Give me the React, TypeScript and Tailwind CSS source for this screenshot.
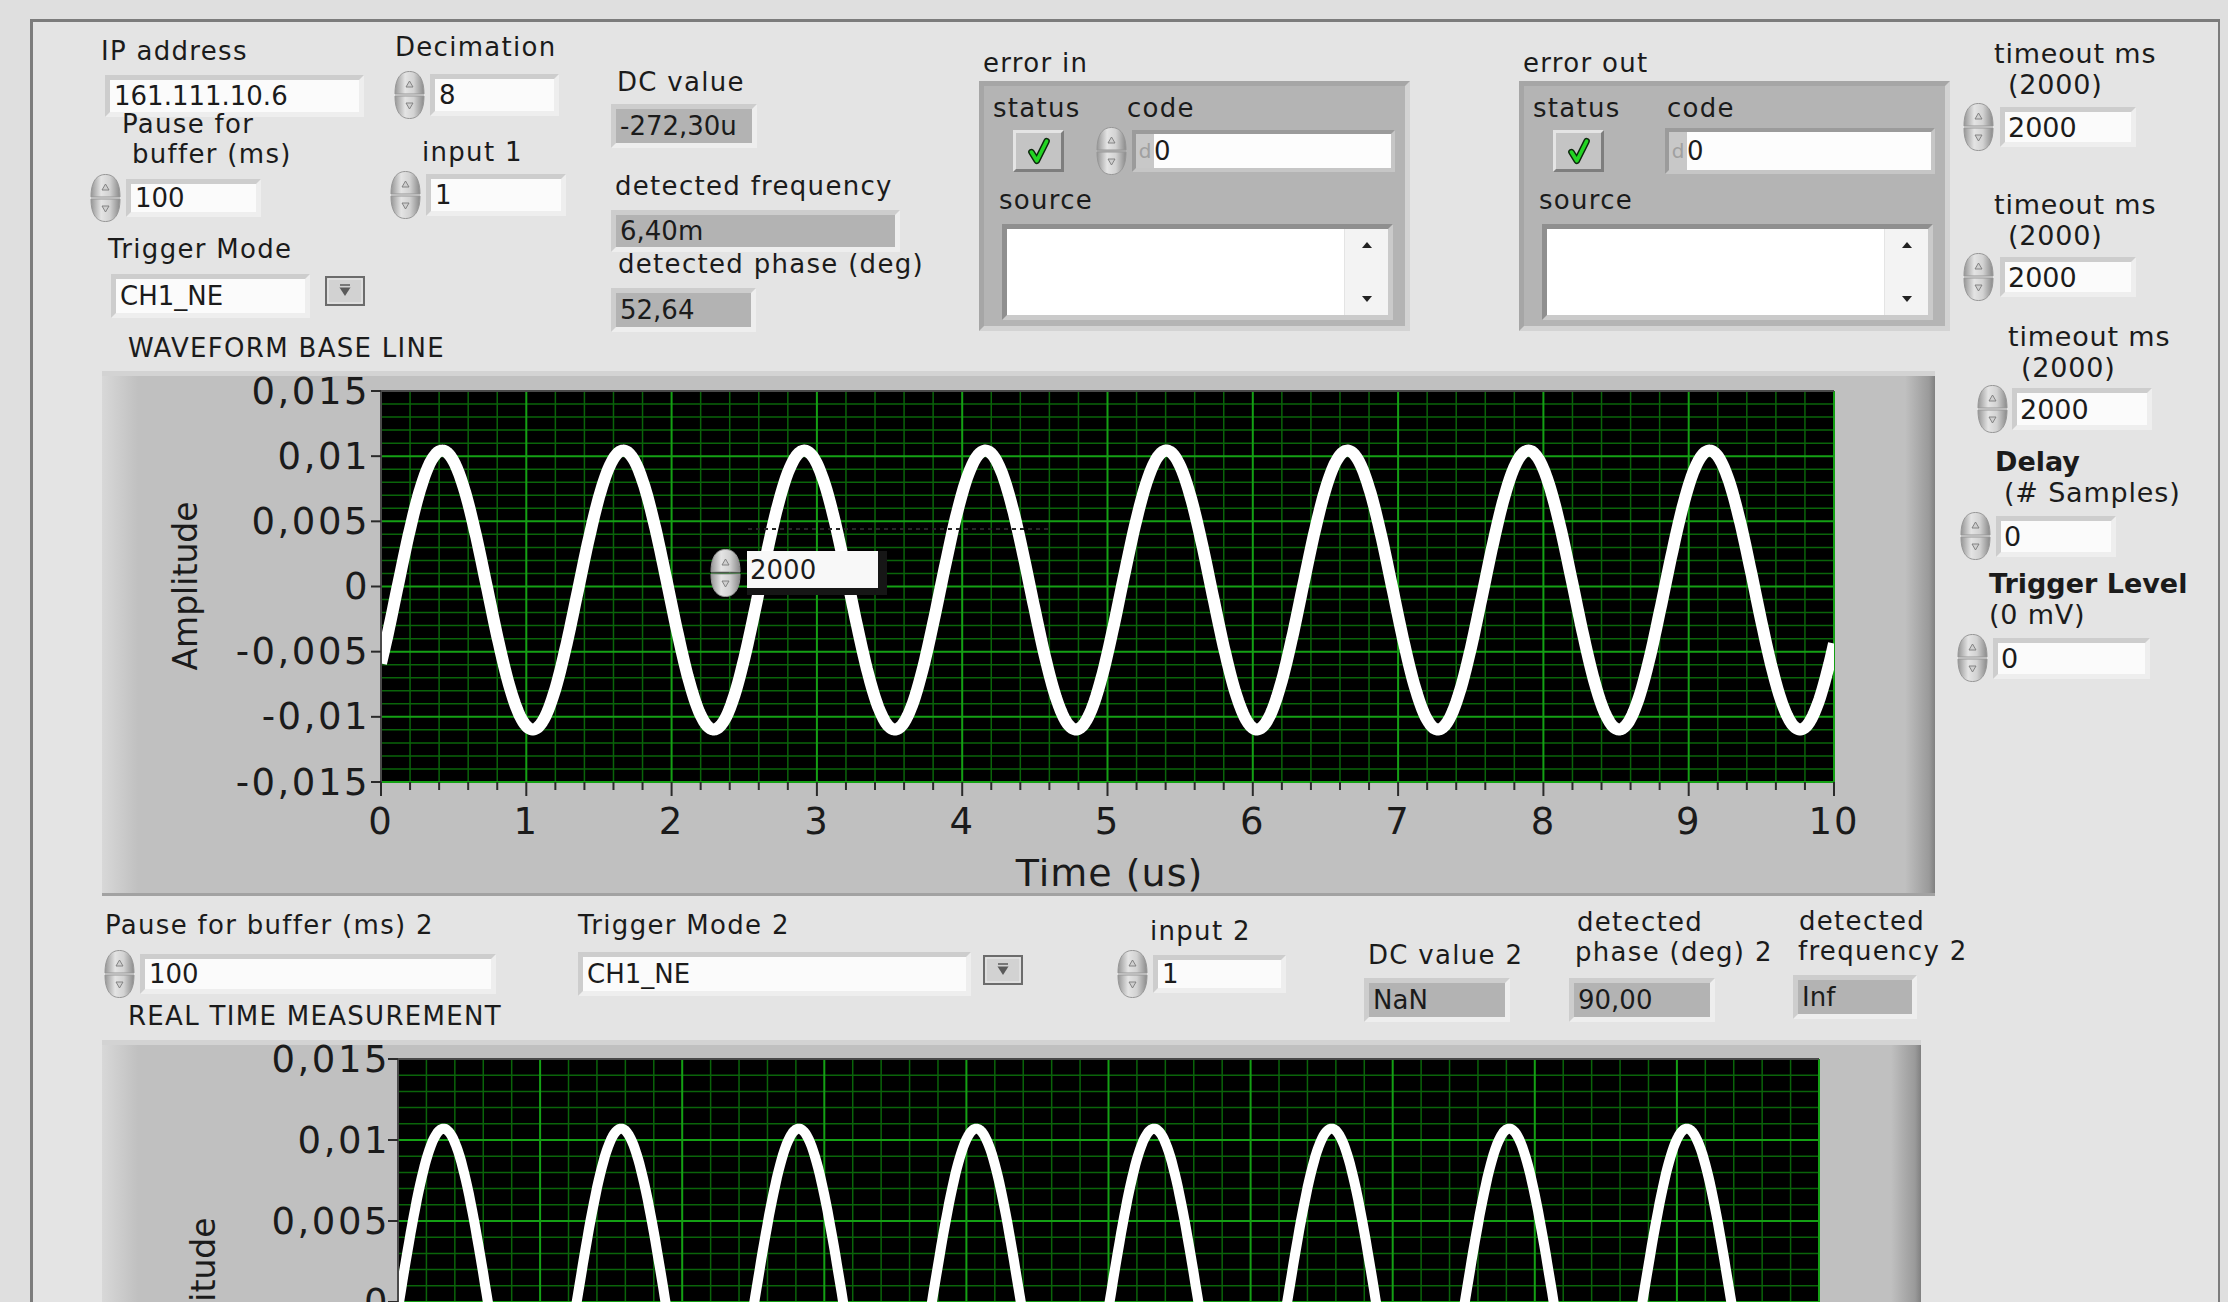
import React from "react";

type Cn = { className?: string };

function Label({ children, className = "" }: { children: React.ReactNode } & Cn) {
  return (
    <div className={`whitespace-nowrap text-[26px] leading-[30px] tracking-[0.05em] text-[#1b1b1b] ${className}`}>
      {children}
    </div>
  );
}

function RLabel({ children, className = "" }: { children: React.ReactNode } & Cn) {
  return (
    <div className={`whitespace-nowrap text-[27px] leading-[31px] tracking-[0.03em] text-[#1b1b1b] ${className}`}>
      {children}
    </div>
  );
}

// LabVIEW increment / decrement arrows
function Spinner({ className = "" }: Cn) {
  return (
    <svg viewBox="0 0 35 50" className={`h-[50px] w-[35px] shrink-0 ${className}`}>
      <defs>
        <linearGradient id="spinFill" x1="0" y1="0" x2="1" y2="0">
          <stop offset="0" stopColor="#969696" />
          <stop offset="0.35" stopColor="#e4e4e4" />
          <stop offset="0.65" stopColor="#d2d2d2" />
          <stop offset="1" stopColor="#8a8a8a" />
        </linearGradient>
      </defs>
      <path d="M3 24 C3 8 9 1.5 17.5 1.5 C26 1.5 32 8 32 24 Z" fill="url(#spinFill)" stroke="#979797" />
      <path d="M3 26 C3 42 9 48.5 17.5 48.5 C26 48.5 32 42 32 26 Z" fill="url(#spinFill)" stroke="#979797" />
      <path d="M14 17 L17.5 11 L21 17 Z" fill="#cfcfcf" stroke="#7a7a7a" strokeWidth="0.9" />
      <path d="M14 33 L17.5 39 L21 33 Z" fill="#cfcfcf" stroke="#7a7a7a" strokeWidth="0.9" />
    </svg>
  );
}

function Field({ value, className = "", gray = false }: { value: string; gray?: boolean } & Cn) {
  return (
    <div
      className={`flex shrink-0 items-center border-[5px] border-t-[#cdcdcd] border-l-[#cdcdcd] border-r-[#eeeeee] border-b-[#eeeeee] pl-[4px] text-[26px] leading-none text-[#1b1b1b] ${
        gray ? "bg-[#b3b3b3]" : "bg-[#fbfbfb]"
      } ${className}`}
    >
      {value}
    </div>
  );
}

function RField({ value, className = "" }: { value: string } & Cn) {
  return (
    <div
      className={`flex shrink-0 items-center border-[5px] border-t-[#cdcdcd] border-l-[#cdcdcd] border-r-[#eeeeee] border-b-[#eeeeee] bg-[#fbfbfb] pl-[3px] text-[27px] leading-none text-[#1b1b1b] ${className}`}
    >
      {value}
    </div>
  );
}

function DropButton({ className = "" }: Cn) {
  return (
    <svg viewBox="0 0 40 30" className={`h-[30px] w-[40px] shrink-0 ${className}`}>
      <rect x="1" y="1" width="38" height="28" fill="#d2d2d2" stroke="#6c6c6c" strokeWidth="2" />
      <rect x="3" y="3" width="34" height="24" fill="none" stroke="#ececec" strokeWidth="1" />
      <line x1="15" y1="9" x2="25" y2="9" stroke="#5a5a5a" strokeWidth="1.5" />
      <path d="M14.5 11.5 L25.5 11.5 L20 20 Z" fill="#5a5a5a" />
    </svg>
  );
}

function Check({ className = "" }: Cn) {
  return (
    <div
      className={`flex h-[42px] w-[51px] shrink-0 items-center justify-center border-[3px] border-t-[#e4e4e4] border-l-[#e4e4e4] border-r-[#7e7e7e] border-b-[#7e7e7e] bg-[#c4c4c4] ${className}`}
    >
      <svg viewBox="0 0 24 26" className="h-[30px] w-[26px]">
        <path d="M5 14 L10 22 L19 4" fill="none" stroke="#0d260d" strokeWidth="6" strokeLinecap="round" strokeLinejoin="round" />
        <path d="M5 14 L10 22 L19 4" fill="none" stroke="#22d422" strokeWidth="3.4" strokeLinecap="round" strokeLinejoin="round" />
      </svg>
    </div>
  );
}

function CodeField({ className = "" }: Cn) {
  return (
    <div
      className={`flex shrink-0 border-[4px] border-t-[#9b9b9b] border-l-[#9b9b9b] border-r-[#c6c6c6] border-b-[#c6c6c6] ${className}`}
    >
      <div className="flex w-[18px] items-center justify-center bg-[#c8c8c8] text-[20px] text-[#a0a0a0]">d</div>
      <div className="flex flex-1 items-center bg-[#fdfdfd] text-[26px] text-[#1b1b1b]">0</div>
    </div>
  );
}

function SourceBox({ className = "" }: Cn) {
  return (
    <div
      className={`flex h-[96px] w-[391px] shrink-0 border-[5px] border-t-[#8f8f8f] border-l-[#8f8f8f] border-r-[#cacaca] border-b-[#cacaca] bg-white ${className}`}
    >
      <div className="flex-1" />
      <div className="flex w-[44px] flex-col items-center justify-between border-l border-[#e4e4e4] bg-[#f3f3f3] py-[12px]">
        <svg viewBox="0 0 12 8" className="h-[8px] w-[12px]">
          <path d="M1 7 L6 1 L11 7 Z" fill="#222" />
        </svg>
        <svg viewBox="0 0 12 8" className="h-[8px] w-[12px]">
          <path d="M1 1 L6 7 L11 1 Z" fill="#222" />
        </svg>
      </div>
    </div>
  );
}

function ErrorCluster({ title, spinner, className = "" }: { title: string; spinner: boolean } & Cn) {
  return (
    <div className={`flex w-[431px] shrink-0 flex-col ${className}`}>
      <Label className="ml-[4px] mt-[26px]">{title}</Label>
      <div className="mt-[3px] flex h-[250px] flex-col border-[5px] border-t-[#a6a6a6] border-l-[#a6a6a6] border-r-[#d3d3d3] border-b-[#d3d3d3] bg-[#b4b4b4]">
        <div className="mt-[7px] flex">
          <Label className="ml-[9px] w-[134px]">status</Label>
          <Label>code</Label>
        </div>
        <div className="mt-[3px] flex h-[50px] items-center">
          <Check className="ml-[29px]" />
          {spinner ? (
            <>
              <Spinner className="ml-[30px]" />
              <CodeField className="ml-[3px] h-[42px] w-[263px]" />
            </>
          ) : (
            <CodeField className="ml-[61px] h-[46px] w-[270px]" />
          )}
        </div>
        <Label className="ml-[15px] mt-[9px]">source</Label>
        <SourceBox className="ml-[18px] mt-[9px]" />
      </div>
    </div>
  );
}

type Wave = { amp: number; off: number; period: number; t0: number; stroke: number };

function Graph({
  w,
  h,
  px,
  py,
  pw,
  ph,
  labelX,
  ampX,
  ampY,
  wave,
  id,
}: {
  w: number;
  h: number;
  px: number;
  py: number;
  pw: number;
  ph: number;
  labelX: number;
  ampX: number;
  ampY: number;
  wave: Wave;
  id: string;
}) {
  const yTicks = ["0,015", "0,01", "0,005", "0", "-0,005", "-0,01", "-0,015"];
  const minorV: number[] = [];
  const majorV: number[] = [];
  for (let i = 0; i <= 50; i++) (i % 5 === 0 ? majorV : minorV).push(px + (i * pw) / 50);
  const minorH: number[] = [];
  const majorH: number[] = [];
  for (let i = 0; i <= 30; i++) (i % 5 === 0 ? majorH : minorH).push(py + (i * ph) / 30);

  const pts: string[] = [];
  for (let i = 0; i <= 900; i++) {
    const t = (i / 900) * 10;
    const v = wave.off + wave.amp * Math.sin((2 * Math.PI * (t - wave.t0)) / wave.period);
    pts.push(`${(px + (t * pw) / 10).toFixed(1)},${(py + ph / 2 - (v / 0.015) * (ph / 2)).toFixed(1)}`);
  }

  return (
    <svg width={w} height={h} viewBox={`0 0 ${w} ${h}`} className="block overflow-visible" fontFamily="DejaVu Sans, sans-serif">
      <defs>
        <linearGradient id={`${id}l`} x1="0" x2="1" y1="0" y2="0">
          <stop offset="0" stopColor="#d8d8d8" />
          <stop offset="1" stopColor="#c0c0c0" />
        </linearGradient>
        <linearGradient id={`${id}r`} x1="0" x2="1" y1="0" y2="0">
          <stop offset="0" stopColor="#c0c0c0" />
          <stop offset="0.8" stopColor="#9a9a9a" />
          <stop offset="1" stopColor="#808080" />
        </linearGradient>
        <clipPath id={`${id}c`}>
          <rect x={px} y={py} width={pw} height={ph} />
        </clipPath>
      </defs>
      <rect x="0" y="0" width={w} height={h} fill="#c0c0c0" />
      <rect x="0" y="0" width="36" height={h} fill={`url(#${id}l)`} />
      <rect x={w - 30} y="0" width="30" height={h} fill={`url(#${id}r)`} />
      <rect x="0" y="0" width={w} height="5" fill="#d3d3d3" />
      <rect x="0" y={h - 3} width={w} height="3" fill="#a2a2a2" />
      <rect x={px} y={py} width={pw} height={ph} fill="#000" />
      {minorV.map((x) => (
        <line key={`mv${x}`} x1={x} y1={py} x2={x} y2={py + ph} stroke="#0a640a" strokeWidth="1.5" />
      ))}
      {minorH.map((y) => (
        <line key={`mh${y}`} x1={px} y1={y} x2={px + pw} y2={y} stroke="#0a640a" strokeWidth="1.5" />
      ))}
      {majorV.map((x) => (
        <line key={`Mv${x}`} x1={x} y1={py} x2={x} y2={py + ph} stroke="#14a014" strokeWidth="2" />
      ))}
      {majorH.map((y) => (
        <line key={`Mh${y}`} x1={px} y1={y} x2={px + pw} y2={y} stroke="#14a014" strokeWidth="2" />
      ))}
      <polyline
        points={pts.join(" ")}
        fill="none"
        stroke="#ffffff"
        strokeWidth={wave.stroke}
        strokeLinejoin="round"
        clipPath={`url(#${id}c)`}
      />
      <line x1={px} y1={py} x2={px + pw} y2={py} stroke="#4a4a4a" strokeWidth="2" />
      <line x1={px} y1={py} x2={px} y2={py + ph} stroke="#4a4a4a" strokeWidth="2" />
      {yTicks.map((t, i) => {
        const y = py + (i * ph) / 6;
        return (
          <g key={t}>
            <line x1={px - 10} y1={y} x2={px} y2={y} stroke="#2a2a2a" strokeWidth="2" />
            <text x={labelX} y={y} textAnchor="end" dominantBaseline="central" fontSize="37" letterSpacing="2.5" fill="#1b1b1b">
              {t}
            </text>
          </g>
        );
      })}
      {Array.from({ length: 51 }, (_, i) => {
        const x = px + (i * pw) / 50;
        return (
          <line key={`tk${i}`} x1={x} y1={py + ph} x2={x} y2={py + ph + (i % 5 === 0 ? 14 : 8)} stroke="#2a2a2a" strokeWidth="2" />
        );
      })}
      {Array.from({ length: 11 }, (_, i) => (
        <text
          key={`xl${i}`}
          x={px + (i * pw) / 10}
          y={py + ph + 39}
          textAnchor="middle"
          dominantBaseline="central"
          fontSize="37"
          letterSpacing="2"
          fill="#1b1b1b"
        >
          {i}
        </text>
      ))}
      <text x={px + pw * 0.5 + 2} y={py + ph + 91} textAnchor="middle" dominantBaseline="central" fontSize="38" letterSpacing="1" fill="#1b1b1b">
        Time (us)
      </text>
      <text
        x={ampX}
        y={ampY}
        transform={`rotate(-90 ${ampX} ${ampY})`}
        textAnchor="middle"
        dominantBaseline="central"
        fontSize="33"
        fill="#1b1b1b"
      >
        Amplitude
      </text>
    </svg>
  );
}

export default function App() {
  return (
    <div className="h-[1302px] w-[2228px] overflow-hidden bg-[#dfdfdf] font-['DejaVu_Sans',sans-serif]">
      <div className="ml-[30px] mt-[19px] flex h-[1300px] w-[2190px] border-l-[3px] border-r-[2px] border-t-[3px] border-[#7c7c7c] bg-[#e4e4e4]">
        {/* main area */}
        <div className="flex w-[1922px] shrink-0 flex-col">
          <div className="flex h-[311px] shrink-0">
            {/* IP / pause / trigger mode */}
            <div className="ml-[55px] flex w-[277px] shrink-0 flex-col">
              <Label className="ml-[13px] mt-[14px]">IP address</Label>
              <Field value="161.111.10.6" className="ml-[17px] mt-[9px] h-[42px] w-[259px]" />
              <div className="-mt-[8px] ml-[34px]">
                <Label>Pause for</Label>
                <Label className="ml-[10px]">buffer (ms)</Label>
              </div>
              <div className="mt-[4px] flex items-center">
                <Spinner />
                <Field value="100" className="ml-[3px] h-[38px] w-[135px]" />
              </div>
              <Label className="ml-[20px] mt-[11px]">Trigger Mode</Label>
              <div className="ml-[23px] mt-[10px] flex items-start">
                <Field value="CH1_NE" className="h-[44px] w-[199px]" />
                <DropButton className="ml-[15px] mt-[2px]" />
              </div>
            </div>

            {/* decimation / input 1 */}
            <div className="ml-[23px] flex w-[178px] shrink-0 flex-col">
              <Label className="ml-[7px] mt-[10px]">Decimation</Label>
              <div className="mt-[8px] flex items-center">
                <Spinner className="ml-[4px]" />
                <Field value="8" className="ml-[3px] h-[42px] w-[129px]" />
              </div>
              <Label className="ml-[34px] mt-[17px]">input 1</Label>
              <div className="mt-[3px] flex items-center">
                <Spinner />
                <Field value="1" className="ml-[3px] h-[42px] w-[140px]" />
              </div>
            </div>

            {/* indicators */}
            <div className="ml-[45px] flex w-[316px] shrink-0 flex-col">
              <Label className="ml-[6px] mt-[45px]">DC value</Label>
              <Field gray value="-272,30u" className="mt-[7px] h-[44px] w-[146px]" />
              <Label className="ml-[4px] mt-[23px]">detected frequency</Label>
              <Field gray value="6,40m" className="mt-[9px] h-[42px] w-[289px]" />
              <Label className="-mt-[3px] ml-[7px]">detected phase (deg)</Label>
              <Field gray value="52,64" className="mt-[9px] h-[44px] w-[145px]" />
            </div>

            <ErrorCluster title="error in" spinner className="ml-[52px]" />
            <ErrorCluster title="error out" spinner={false} className="ml-[109px]" />
          </div>

          {/* waveform base line */}
          <Label className="ml-[95px]">WAVEFORM BASE LINE</Label>
          <div className="relative ml-[69px] mt-[8px] h-[525px] w-[1833px] shrink-0">
            <Graph
              id="g1"
              w={1833}
              h={525}
              px={279}
              py={20}
              pw={1453}
              ph={391}
              labelX={268}
              ampX={83}
              ampY={215}
              wave={{ amp: 0.0107, off: -0.00027, period: 1.246, t0: 0.11, stroke: 12 }}
            />
            <svg className="absolute left-[646px] top-[154px] h-[8px] w-[300px]" viewBox="0 0 300 8">
              <line x1="0" y1="4" x2="300" y2="4" stroke="#262626" strokeWidth="2" strokeDasharray="4 4" />
            </svg>
            <div className="absolute left-[606px] top-[177px] flex items-center">
              <Spinner />
              <div className="ml-[4px] flex h-[44px] w-[140px] items-start bg-[#161616]">
                <div className="flex h-[37px] w-[131px] items-center bg-[#f8f8f8] pl-[3px] text-[26px] leading-none text-[#1b1b1b]">
                  2000
                </div>
              </div>
            </div>
          </div>

          {/* second row of controls */}
          <div className="mt-[4px] flex h-[101px] shrink-0">
            <div className="ml-[69px] flex w-[395px] shrink-0 flex-col">
              <Label className="ml-[3px] mt-[10px]">Pause for buffer (ms) 2</Label>
              <div className="mt-[9px] flex items-center">
                <Spinner />
                <Field value="100" className="ml-[3px] h-[40px] w-[356px]" />
              </div>
            </div>
            <div className="ml-[81px] flex w-[445px] shrink-0 flex-col">
              <Label className="mt-[10px]">Trigger Mode 2</Label>
              <div className="mt-[12px] flex items-start">
                <Field value="CH1_NE" className="h-[44px] w-[393px]" />
                <DropButton className="ml-[12px] mt-[3px]" />
              </div>
            </div>
            <div className="ml-[92px] flex w-[172px] shrink-0 flex-col">
              <Label className="ml-[35px] mt-[16px]">input 2</Label>
              <div className="mt-[3px] flex items-center">
                <Spinner />
                <Field value="1" className="ml-[3px] h-[38px] w-[133px]" />
              </div>
            </div>
            <div className="ml-[77px] flex w-[205px] shrink-0 flex-col">
              <Label className="ml-[4px] mt-[40px]">DC value 2</Label>
              <Field gray value="NaN" className="mt-[8px] h-[44px] w-[146px]" />
            </div>
            <div className="flex w-[224px] shrink-0 flex-col">
              <Label className="ml-[8px] mt-[7px]">detected</Label>
              <Label className="ml-[6px]">phase (deg) 2</Label>
              <Field gray value="90,00" className="mt-[11px] h-[44px] w-[146px]" />
            </div>
            <div className="flex w-[130px] shrink-0 flex-col">
              <Label className="ml-[6px] mt-[6px]">detected</Label>
              <Label className="ml-[5px]">frequency 2</Label>
              <Field gray value="Inf" className="mt-[9px] h-[44px] w-[124px]" />
            </div>
          </div>

          {/* real time measurement */}
          <Label className="ml-[95px]">REAL TIME MEASUREMENT</Label>
          <div className="ml-[69px] mt-[9px] h-[560px] w-[1819px] shrink-0">
            <Graph
              id="g2"
              w={1819}
              h={560}
              px={296}
              py={19}
              pw={1421}
              ph={486}
              labelX={288}
              ampX={101}
              ampY={262}
              wave={{ amp: 0.0107, off: 0, period: 1.25, t0: 0.0075, stroke: 10 }}
            />
          </div>
        </div>

        {/* right column */}
        <div className="flex w-[262px] shrink-0 flex-col">
          <div className="mt-[16px]">
            <RLabel className="ml-[39px]">timeout ms</RLabel>
            <RLabel className="ml-[53px]">(2000)</RLabel>
          </div>
          <div className="mt-[2px] flex items-center">
            <Spinner className="ml-[6px]" />
            <RField value="2000" className="ml-[4px] h-[40px] w-[136px]" />
          </div>
          <div className="mt-[37px]">
            <RLabel className="ml-[39px]">timeout ms</RLabel>
            <RLabel className="ml-[53px]">(2000)</RLabel>
          </div>
          <div className="mt-[1px] flex items-center">
            <Spinner className="ml-[6px]" />
            <RField value="2000" className="ml-[4px] h-[40px] w-[136px]" />
          </div>
          <div className="mt-[19px]">
            <RLabel className="ml-[53px]">timeout ms</RLabel>
            <RLabel className="ml-[66px]">(2000)</RLabel>
          </div>
          <div className="mt-[1px] flex items-center">
            <Spinner className="ml-[20px]" />
            <RField value="2000" className="ml-[2px] h-[42px] w-[140px]" />
          </div>
          <div className="mt-[12px]">
            <RLabel className="ml-[40px] text-[25px] font-bold tracking-normal">Delay</RLabel>
            <RLabel className="ml-[49px]">(# Samples)</RLabel>
          </div>
          <div className="mt-[3px] flex items-center">
            <Spinner className="ml-[3px]" />
            <RField value="0" className="ml-[3px] h-[41px] w-[120px]" />
          </div>
          <div className="mt-[7px]">
            <RLabel className="ml-[34px] text-[25px] font-bold tracking-normal">Trigger Level</RLabel>
            <RLabel className="ml-[34px]">(0 mV)</RLabel>
          </div>
          <div className="mt-[3px] flex items-center">
            <Spinner />
            <RField value="0" className="ml-[3px] h-[41px] w-[157px]" />
          </div>
        </div>
      </div>
    </div>
  );
}
